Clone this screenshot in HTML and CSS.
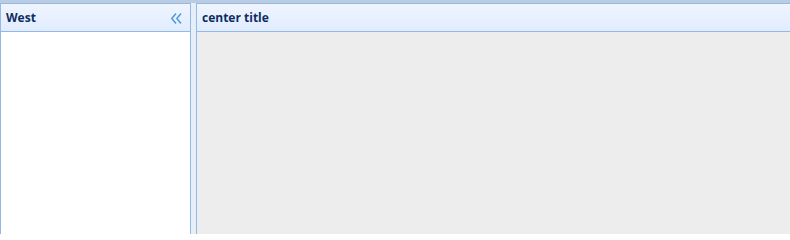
FILE: index.html
```html
<!DOCTYPE html>
<html>
<head>
<meta charset="utf-8">
<link rel="stylesheet" href="styles.css">
</head>
<body>
<div class="topband"></div>
<div class="layout">
  <div class="panel west">
    <div class="panel-header">
      <span class="panel-title">West</span>
      <svg class="collapse" width="11" height="11" viewBox="0 0 11 11">
        <path d="M5 0.5 L0.8 5.5 L5 10.5 M10 0.5 L5.8 5.5 L10 10.5" fill="none" stroke="#4e9ae0" stroke-width="1.5"/>
      </svg>
    </div>
    <div class="panel-body west-body"></div>
  </div>
  <div class="split"></div>
  <div class="panel center">
    <div class="panel-header">
      <span class="panel-title">center title</span>
    </div>
    <div class="panel-body center-body"></div>
  </div>
</div>
</body>
</html>
```
FILE: styles.css
```css
html, body {
  margin: 0;
  padding: 0;
  width: 790px;
  height: 234px;
  overflow: hidden;
  background: #ffffff;
  font-family: "Open Sans", "DejaVu Sans", sans-serif;
}
.topband {
  height: 3px;
  background: #b9cce2;
}
.layout {
  display: flex;
  height: 231px;
}
.panel {
  display: flex;
  flex-direction: column;
  border-top: 1px solid #95b8e7;
  border-left: 1px solid #95b8e7;
}
.west {
  width: 189px;
  border-right: 1px solid #95b8e7;
}
.split {
  width: 5px;
  background: #e6eef8;
}
.center {
  flex: 1;
}
.panel-header {
  height: 28px;
  box-sizing: border-box;
  border-bottom: 1px solid #95b8e7;
  background: linear-gradient(to bottom, #eff5ff 0, #e0ecff 100%);
  display: flex;
  align-items: center;
  padding: 0 0 0 5px;
}
.panel-title {
  font-size: 12px;
  font-weight: bold;
  color: #0e2d5f;
  flex: 1;
}
.collapse {
  margin-right: 8px;
  margin-top: 1px;
}
.panel-body {
  flex: 1;
}
.west-body {
  background: #ffffff;
}
.center-body {
  background: #ededed;
}
```
